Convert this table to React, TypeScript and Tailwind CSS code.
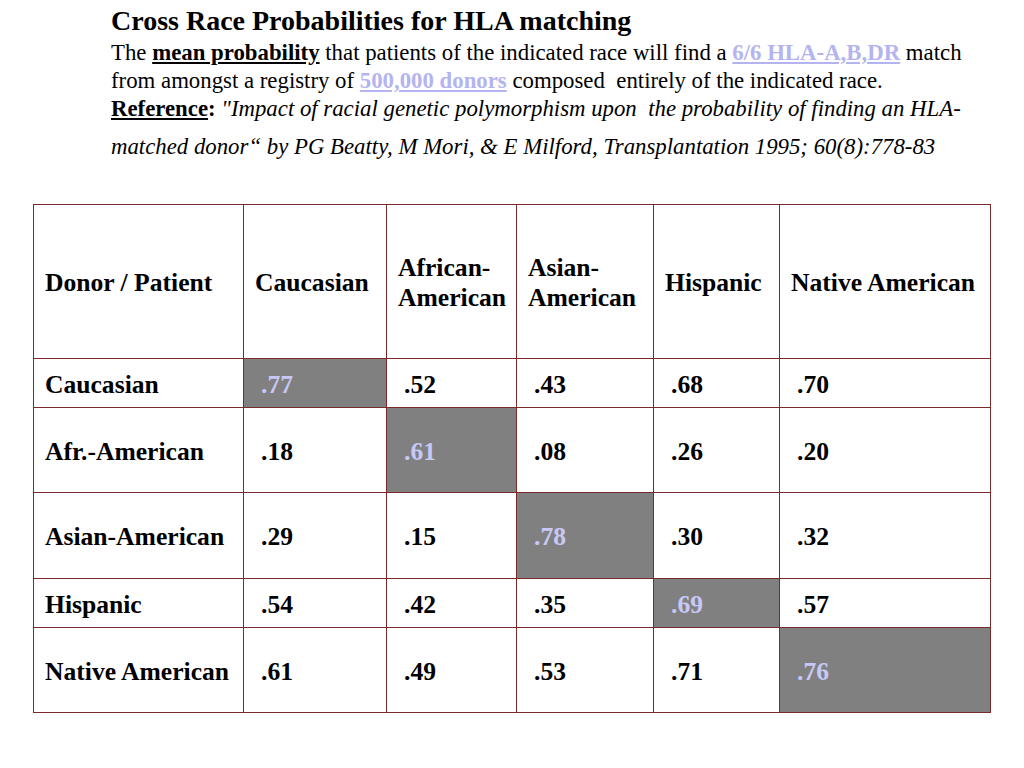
import React from "react";

const cols = ["Caucasian", "African-\nAmerican", "Asian-\nAmerican", "Hispanic", "Native American"];
const widths = ["w-[210px]", "w-[143px]", "w-[130px]", "w-[137px]", "w-[126px]", "w-[211px]"];

const rows: { name: string; h: string; vals: string[] }[] = [
  { name: "Caucasian", h: "h-[49px]", vals: [".77", ".52", ".43", ".68", ".70"] },
  { name: "Afr.-American", h: "h-[85px]", vals: [".18", ".61", ".08", ".26", ".20"] },
  { name: "Asian-American", h: "h-[86px]", vals: [".29", ".15", ".78", ".30", ".32"] },
  { name: "Hispanic", h: "h-[49px]", vals: [".54", ".42", ".35", ".69", ".57"] },
  { name: "Native American", h: "h-[85px]", vals: [".61", ".49", ".53", ".71", ".76"] },
];

const link = "font-bold underline text-[#b4b4f0]";

export default function App() {
  return (
    <div className="w-[1024px] h-[768px] bg-white text-black font-['Liberation_Serif','Times_New_Roman',serif]">
      {/* header text */}
      <div className="pl-[111px] pt-[3px]">
        <div className="text-[28px] leading-[36px] font-bold whitespace-nowrap">Cross Race Probabilities for HLA matching</div>
        <div className="text-[22.8px] leading-[28px] whitespace-nowrap">
          The <span className="font-bold underline">mean probability</span> that patients of the indicated race will find a{" "}
          <span className={link}>6/6 HLA-A,B,DR</span> match
        </div>
        <div className="text-[22.8px] leading-[28px] whitespace-pre">
          from amongst a registry of <span className={link}>500,000 donors</span> composed  entirely of the indicated race.
        </div>
        <div className="text-[22.8px] leading-[28px] whitespace-pre">
          <span className="font-bold underline">Reference</span>
          <span className="font-bold">:</span>{" "}
          <span className="italic">"Impact of racial genetic polymorphism upon  the probability of finding an HLA-</span>
        </div>
        <div className="text-[22.8px] leading-[28px] mt-[10px] italic whitespace-nowrap">
          matched donor“ by PG Beatty, M Mori, &amp; E Milford, Transplantation 1995; 60(8):778-83
        </div>
      </div>

      {/* table */}
      <table className="ml-[33px] mt-[43px] border-collapse text-[25.6px] font-bold leading-[30px]">
        <tbody>
          <tr className="h-[154px]">
            <td className={`${widths[0]} border border-[#7a2a2a] pl-[11px] pt-[3px] align-middle`}>Donor / Patient</td>
            {cols.map((c, i) => (
              <td key={c} className={`${widths[i + 1]} border border-[#7a2a2a] pl-[11px] pt-[3px] align-middle whitespace-pre-line`}>
                {c}
              </td>
            ))}
          </tr>
          {rows.map((r, ri) => (
            <tr key={r.name} className={r.h}>
              <td className="border border-[#7a2a2a] pl-[11px] pt-[3px] align-middle">{r.name}</td>
              {r.vals.map((v, ci) =>
                ci === ri ? (
                  <td key={ci} className="border border-[#7a2a2a] bg-[#808080] text-[#c8c8f8] pl-[17px] pt-[3px] align-middle">
                    {v}
                  </td>
                ) : (
                  <td key={ci} className="border border-[#7a2a2a] pl-[17px] pt-[3px] align-middle">
                    {v}
                  </td>
                )
              )}
            </tr>
          ))}
        </tbody>
      </table>
    </div>
  );
}
